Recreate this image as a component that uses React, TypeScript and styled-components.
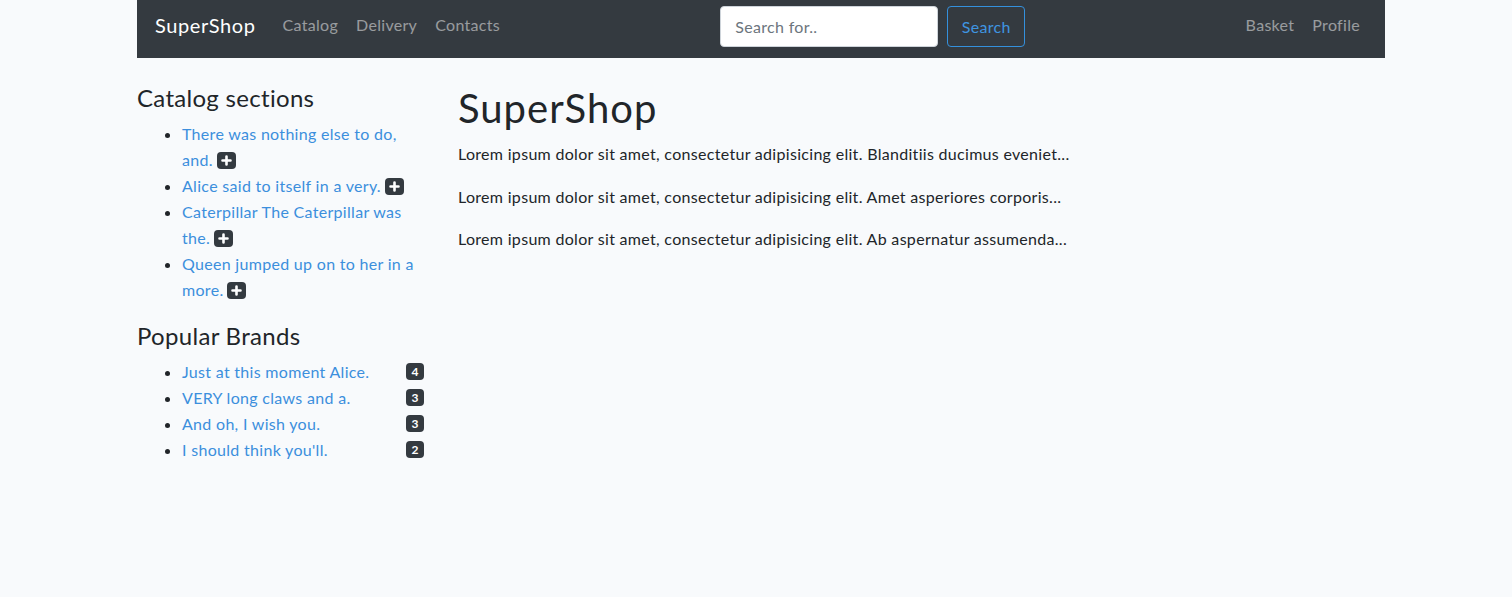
import React from "react";
import styled, { createGlobalStyle } from "styled-components";

const Global = createGlobalStyle`
  html, body { margin: 0; padding: 0; }
  body {
    background: #f8fafc;
    font-family: "Lato", "Noto Sans", sans-serif;
    font-size: 16px;
    line-height: 1.6;
    letter-spacing: 0.019em;
    color: #212529;
  }
  * { box-sizing: border-box; }
`;

const Page = styled.div`
  width: 1248px;
  margin-left: 137px;
`;

const Navbar = styled.nav`
  height: 58px;
  background: #343a40;
  display: flex;
  align-items: center;
  padding: 0 16px 5px 18px;
`;

const Brand = styled.a`
  color: #fff;
  font-size: 20px;
  margin-right: 18px;
  padding-bottom: 4px;
  letter-spacing: 0.03em;
  text-decoration: none;
`;

const NavGroup = styled.div`
  display: flex;
  align-items: center;
`;

const NavLink = styled.a`
  color: rgba(255, 255, 255, 0.5);
  padding: 0 9px 4px;
  font-size: 16px;
  text-decoration: none;
`;

const SearchForm = styled.form`
  display: flex;
  align-items: center;
  gap: 9px;
  margin: 0 auto;
`;

const SearchInput = styled.input`
  width: 218px;
  height: 41px;
  border: 1px solid #ced4da;
  border-radius: 4px;
  background: #fff;
  padding: 0 14px;
  font-family: inherit;
  font-size: 16px;
  letter-spacing: 0.019em;
  color: #495057;
  &::placeholder { color: #6c757d; }
`;

const SearchButton = styled.button`
  height: 41px;
  width: 78px;
  border: 1px solid #3490dc;
  border-radius: 4px;
  background: transparent;
  color: #3f95e0;
  font-family: inherit;
  font-size: 16px;
  letter-spacing: 0.019em;
  padding: 0;
`;

const Body = styled.div`
  display: flex;
  padding-top: 26px;
`;

const Sidebar = styled.aside`
  width: 287px;
  flex: none;
`;

const Main = styled.main`
  margin-left: 34px;
  flex: 1;
`;

const SectionTitle = styled.h4`
  font-size: 24px;
  font-weight: 400;
  line-height: 1.2;
  margin: 0 0 8px;
`;

const List = styled.ul`
  margin: 0 0 19px;
  padding-left: 45px;
`;

const Item = styled.li`
  line-height: 26px;
`;

const Link = styled.a`
  color: #3c8fdd;
  text-decoration: none;
`;

const Badge = styled.span`
  display: inline-flex;
  align-items: center;
  justify-content: center;
  min-width: 18px;
  height: 17px;
  padding: 0 4px;
  border-radius: 4px;
  background: #343a40;
  color: #fff;
  font-size: 12px;
  font-weight: 700;
  line-height: 1;
  letter-spacing: 0;
  vertical-align: middle;
`;

const PlusBadge = styled(Badge)`
  width: 19px;
  margin-left: 4px;
  padding: 0;
  position: relative;
  top: -1px;
`;

const BrandRow = styled.span`
  display: flex;
  justify-content: space-between;
  align-items: center;
`;

const Title = styled.h1`
  font-size: 40px;
  font-weight: 400;
  line-height: 1.2;
  letter-spacing: 0.025em;
  margin: 0 0 9px;
`;

const Para = styled.p`
  margin: 0 0 17px;
`;

const Plus = () => (
  <svg width="11" height="11" viewBox="0 0 11 11">
    <path d="M5.5 1.5v8M1.5 5.5h8" stroke="#fff" strokeWidth="2.6" strokeLinecap="round" />
  </svg>
);

const sections = [
  "There was nothing else to do, and.",
  "Alice said to itself in a very.",
  "Caterpillar The Caterpillar was the.",
  "Queen jumped up on to her in a more.",
];

const brands: [string, number][] = [
  ["Just at this moment Alice.", 4],
  ["VERY long claws and a.", 3],
  ["And oh, I wish you.", 3],
  ["I should think you'll.", 2],
];

const paras = [
  "Lorem ipsum dolor sit amet, consectetur adipisicing elit. Blanditiis ducimus eveniet...",
  "Lorem ipsum dolor sit amet, consectetur adipisicing elit. Amet asperiores corporis...",
  "Lorem ipsum dolor sit amet, consectetur adipisicing elit. Ab aspernatur assumenda...",
];

export default function App() {
  return (
    <Page>
      <Global />
      <Navbar>
        <NavGroup>
          <Brand href="#">SuperShop</Brand>
          <NavLink href="#">Catalog</NavLink>
          <NavLink href="#">Delivery</NavLink>
          <NavLink href="#">Contacts</NavLink>
        </NavGroup>
        <SearchForm onSubmit={(e) => e.preventDefault()}>
          <SearchInput placeholder="Search for.." />
          <SearchButton type="submit">Search</SearchButton>
        </SearchForm>
        <NavGroup>
          <NavLink href="#">Basket</NavLink>
          <NavLink href="#">Profile</NavLink>
        </NavGroup>
      </Navbar>
      <Body>
        <Sidebar>
          <SectionTitle>Catalog sections</SectionTitle>
          <List>
            {sections.map((s) => (
              <Item key={s}>
                <Link href="#">{s}</Link>
                <PlusBadge>
                  <Plus />
                </PlusBadge>
              </Item>
            ))}
          </List>
          <SectionTitle>Popular Brands</SectionTitle>
          <List>
            {brands.map(([b, n]) => (
              <Item key={b}>
                <BrandRow>
                  <Link href="#">{b}</Link>
                  <Badge>{n}</Badge>
                </BrandRow>
              </Item>
            ))}
          </List>
        </Sidebar>
        <Main>
          <Title>SuperShop</Title>
          {paras.map((p) => (
            <Para key={p}>{p}</Para>
          ))}
        </Main>
      </Body>
    </Page>
  );
}
